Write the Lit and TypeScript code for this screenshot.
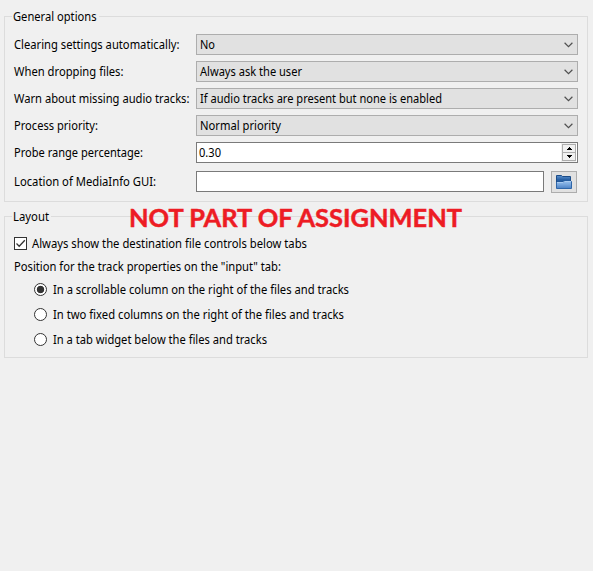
import { LitElement, html, css, svg } from "lit";
import { customElement, property } from "lit/decorators.js";
import { classMap } from "lit/directives/class-map.js";

// A single text line squeezed or stretched to the width the dialog font gives it.
@customElement("fit-text")
class FitText extends LitElement {
  @property() text = "";
  @property({ type: Number }) width = 100;
  @property({ type: Number }) size = 12;
  @property({ type: Boolean }) bold = false;
  static styles = css`
    :host { display: block; flex: none; }
    svg { display: block; overflow: visible; height: 16px; }
    text { font-family: "Noto Sans", "Open Sans", sans-serif; fill: #000; }
    .bold { font-family: Lato, "Open Sans", sans-serif; font-weight: 700; fill: #ed1c24; stroke: #ed1c24; stroke-width: .45px; }
  `;
  render() {
    return html`<svg width=${this.width} height="16">
      ${svg`<text class=${this.bold ? "bold" : ""} x="0" y="12" font-size=${this.size}
        textLength=${this.width} lengthAdjust="spacingAndGlyphs">${this.text}</text>`}
    </svg>`;
  }
}

@customElement("combo-box")
class ComboBox extends LitElement {
  @property() text = "";
  @property({ type: Number }) width = 0;
  static styles = css`
    :host { display: flex; align-items: center; justify-content: space-between; box-sizing: border-box;
      width: 382px; height: 21px; border: 1px solid #adadad; background: #e1e1e1; padding: 0 4px 0 3px; }
    .arrow { display: block; width: 9px; height: 6px; }
  `;
  render() {
    return html`<fit-text .text=${this.text} .width=${this.width}></fit-text>
      <svg class="arrow" viewBox="0 0 9 6"><path d="M.6 .8 4.5 4.6 8.4 .8" fill="none" stroke="#505050" stroke-width="1.2"/></svg>`;
  }
}

@customElement("group-box")
class GroupBox extends LitElement {
  @property() text = "";
  @property({ type: Number }) width = 0;
  static styles = css`
    :host { display: block; box-sizing: border-box; border: 1px solid #dcdcdc; }
    .title { display: block; width: max-content; margin: -8px 0 0 7px; padding: 0 2px 0 1px; background: #f0f0f0; height: 16px; }
  `;
  render() {
    return html`<div class="title"><fit-text .text=${this.text} .width=${this.width}></fit-text></div><slot></slot>`;
  }
}

@customElement("app-root")
class AppRoot extends LitElement {
  static styles = css`
    :host { display: block; position: relative; box-sizing: border-box; width: 593px; height: 571px;
      padding: 16px 5px 0 4px; background: #f0f0f0; overflow: hidden; }
    .general { height: 186px; }
    .layout { height: 142px; margin-top: 14px; }
    .form { display: grid; grid-template-columns: 182px 382px; grid-template-rows: 21px 21px 21px 21px 21px 24px;
      row-gap: 6px; margin: 9px 0 0 9px; align-items: center; }
    .spin { display: flex; align-items: center; justify-content: space-between; box-sizing: border-box; height: 21px;
      border: 1px solid #7a7a7a; background: #fff; padding: 0 1px 0 2px; }
    .buttons { display: flex; flex-direction: column; background: #f0f0f0; padding: 0 0 0 1px; height: 19px;
      justify-content: center; }
    .step { display: flex; box-sizing: border-box; width: 14px; height: 9px; border: 1px solid #adadad;
      align-items: center; justify-content: center; background: #f0f0f0; }
    .step + .step { margin-top: -1px; }
    .step svg { display: block; width: 5px; height: 3px; }
    .last { padding-top: 1px; }
    .path { display: flex; justify-content: space-between; align-items: flex-start; height: 22px; margin: 1px 1px 0 0; }
    .input { box-sizing: border-box; width: 348px; height: 21px; border: 1px solid #7a7a7a; background: #fff; }
    .browse { display: flex; align-items: center; justify-content: center; box-sizing: border-box; width: 26px; height: 22px;
      border: 1px solid #adadad; background: #e1e1e1; }
    .browse svg { display: block; width: 16px; height: 16px; }
    .choice { display: flex; align-items: flex-start; height: 16px; }
    .mark { display: block; width: 13px; height: 13px; box-sizing: border-box; border: 1px solid #333; background: #fff;
      margin: 1px 5px 0 0; }
    .mark svg { display: block; width: 11px; height: 11px; }
    .check { margin: 11px 0 0 9px; }
    .note { margin: 7px 0 0 9px; }
    .radio { margin: 7px 0 9px 29px; }
    .radio + .radio { margin-top: 9px; }
    .round { border-radius: 50%; margin-right: 6px; }
    .on { background: radial-gradient(circle at center, #333 0 3.4px, #fff 4.1px); }
    .stamp { position: absolute; left: 129px; top: 215px; }
  `;

  rows: [string, number, string, number][] = [
    ["Clearing settings automatically:", 165.5, "No", 15],
    ["When dropping files:", 109.5, "Always ask the user", 102],
    ["Warn about missing audio tracks:", 175.5, "If audio tracks are present but none is enabled", 242],
    ["Process priority:", 84, "Normal priority", 81],
  ];
  radios: [string, number][] = [
    ["In a scrollable column on the right of the files and tracks", 296],
    ["In two fixed columns on the right of the files and tracks", 291],
    ["In a tab widget below the files and tracks", 214],
  ];

  render() {
    const label = (t: string, w: number) => html`<fit-text .text=${t} .width=${w}></fit-text>`;
    return html`
      <group-box class="general" .text=${"General options"} .width=${83.5}>
        <div class="form">
          ${this.rows.map(([l, w, v, vw]) => html`${label(l, w)}<combo-box .text=${v} .width=${vw}></combo-box>`)}
          ${label("Probe range percentage:", 129)}
          <div class="spin">
            ${label("0.30", 22)}
            <div class="buttons">
              <div class="step"><svg viewBox="0 0 5 3"><path d="M0 3V2H1V1H2V0H3V1H4V2H5V3Z"/></svg></div>
              <div class="step"><svg viewBox="0 0 5 3"><path d="M0 0V1H1V2H2V3H3V2H4V1H5V0Z"/></svg></div>
            </div>
          </div>
          <div class="last">${label("Location of MediaInfo GUI:", 142)}</div>
          <div class="path">
            <div class="input"></div>
            <div class="browse">
              <svg viewBox="0 0 16 16">
                <defs>
                  <linearGradient id="back" x2="0" y2="1"><stop stop-color="#5f93cf"/><stop offset=".5" stop-color="#2a62a6"/><stop offset="1" stop-color="#1d4f8f"/></linearGradient>
                  <linearGradient id="front" x2="0" y2="1"><stop stop-color="#94bdea"/><stop offset=".4" stop-color="#7aa8de"/><stop offset="1" stop-color="#4a80c4"/></linearGradient>
                </defs>
                <path d="M.5 1.5H5.5L6.5 2.5H14.5V9.5H.5Z" fill="url(#back)" stroke="#1c4c88"/>
                <path d="M.5 8.5H7L8.5 7.5H15.5V14.5H.5Z" fill="url(#front)" stroke="#2f66a8"/>
                <path d="M1 8.5H7L8.5 7.5H15" fill="none" stroke="#a9cbf0"/>
              </svg>
            </div>
          </div>
        </div>
      </group-box>
      <group-box class="layout" .text=${"Layout"} .width=${36}>
        <div class="choice check">
          <span class="mark"><svg viewBox="0 0 11 11"><path d="M1.5 5.5 4.2 8.2 9.8 2.2" fill="none" stroke="#333" stroke-width="1.3"/></svg></span>
          ${label("Always show the destination file controls below tabs", 275)}
        </div>
        <div class="note">${label('Position for the track properties on the "input" tab:', 267)}</div>
        ${this.radios.map(([t, w], i) => html`<div class="choice radio">
          <span class=${classMap({ mark: true, round: true, on: i === 0 })}></span>${label(t, w)}</div>`)}
      </group-box>
      <fit-text class="stamp" bold .text=${"NOT PART OF ASSIGNMENT"} .width=${333} .size=${24.8}></fit-text>
    `;
  }
}
